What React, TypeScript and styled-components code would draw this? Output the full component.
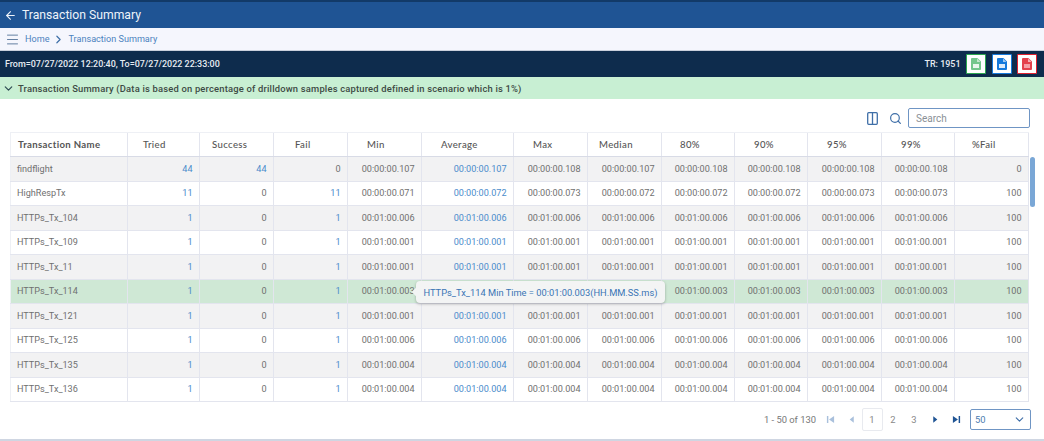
import React from 'react'
import styled, { createGlobalStyle } from 'styled-components'
import { ArrowLeft, ChevronDown, ChevronRight, Menu, Search } from 'lucide-react'

const GlobalStyle = createGlobalStyle`
  html, body {
    margin: 0;
    padding: 0;
    background: #fff;
    font-family: Roboto, "Liberation Sans", Arial, sans-serif;
    overflow: hidden;
  }
  * { box-sizing: border-box; }
`

const COLUMNS = '118px 72px 74px 74px 74px 92px 74px 74px 73px 73px 74px 73px 74px'
const BORDER = '#e3e5ee'
const LINK = '#4a8ccb'
const TEXT = '#707070'

const Page = styled.div`
  width: 1044px;
  height: 441px;
  display: flex;
  flex-direction: column;
  overflow: hidden;
  border-bottom: 2px solid #cfd6e2;
`

const TitleBar = styled.div`
  height: 28px;
  flex: none;
  display: flex;
  align-items: center;
  gap: 5px;
  padding-left: 4px;
  background: #1f5494;
  border-top: 2px solid #123a68;
  color: #eef3fa;
  font-size: 12.2px;
`

const Breadcrumb = styled.div`
  height: 23px;
  flex: none;
  display: flex;
  align-items: center;
  padding-left: 5px;
  background: #f5f6fd;
  border-bottom: 1px solid #c9d0dc;
  color: #4c82bd;
  font-size: 9.1px;
`

const Crumbs = styled.div`
  display: flex;
  align-items: center;
  gap: 3px;
  margin-left: 5px;
`

const RunBar = styled.div`
  height: 26px;
  flex: none;
  display: flex;
  align-items: center;
  justify-content: space-between;
  padding: 0 7px 0 5px;
  background: #0e2c4d;
  color: #e8edf3;
  font-size: 8.95px;
  font-weight: 500;
`

const RunActions = styled.div`
  display: flex;
  align-items: center;
  gap: 5.5px;
`

const ExportButton = styled.button<{ $tone: string }>`
  width: 20px;
  height: 20px;
  padding: 0;
  display: flex;
  align-items: center;
  justify-content: center;
  background: #fff;
  border: 1.5px solid ${p => p.$tone};
  border-radius: 1px;
  color: ${p => p.$tone};
`

const SummaryBar = styled.div`
  height: 22px;
  flex: none;
  display: flex;
  align-items: center;
  gap: 3px;
  padding-left: 2px;
  background: #c8efd3;
  color: #3d4a44;
  font-size: 9.4px;
  font-weight: 500;
  letter-spacing: 0.19px;
`

const Content = styled.div`
  flex: 1;
  min-height: 0;
  display: flex;
  flex-direction: column;
  padding: 7px 15px 0 10px;
`

const TableTools = styled.div`
  height: 24px;
  flex: none;
  margin-right: -1px;
  display: flex;
  align-items: center;
  justify-content: flex-end;
  color: #3f6fa8;
`

const ColumnsGlyph = styled.svg`
  width: 11px;
  height: 13px;
  margin-right: 11px;
  fill: none;
  stroke: #3f6fa8;
  stroke-width: 1.3;
`

const SearchBox = styled.div`
  width: 122px;
  height: 20px;
  margin-left: 6px;
  padding-left: 7px;
  display: flex;
  align-items: center;
  background: #fff;
  border: 1px solid #6f95c4;
  border-radius: 2px;
  color: #8a8f96;
  font-size: 10px;
`

const TableFrame = styled.div`
  position: relative;
  margin-top: 2px;
  height: 271px;
  flex: none;
  border-bottom: 1px solid #fff;
`

const Row = styled.div<{ $bg?: string }>`
  display: grid;
  grid-template-columns: ${COLUMNS};
  height: 24.5px;
  background: ${p => p.$bg || '#fff'};
  border-bottom: 1px solid ${BORDER};
`

const HeaderRow = styled(Row)`
  height: 25px;
  border-top: 1px solid #eef0f5;
  border-bottom: 1px solid #d8dbe6;
`

const HeaderCell = styled.div<{ $first?: boolean; $pad: number }>`
  display: flex;
  align-items: center;
  padding-left: ${p => p.$pad}px;
  border-right: 1px solid ${BORDER};
  color: #555;
  font-family: Lato, "Noto Sans", sans-serif;
  font-size: 9.6px;
  font-weight: ${p => (p.$first ? 700 : 500)};
  letter-spacing: 0.35px;
  white-space: nowrap;
  &:first-child { border-left: 1px solid #eef0f5; }
`

const Cell = styled.div<{ $left?: boolean; $link?: boolean }>`
  display: flex;
  align-items: center;
  justify-content: ${p => (p.$left ? 'flex-start' : 'flex-end')};
  padding: 0 ${p => (p.$left ? 0 : 6.5)}px 0 ${p => (p.$left ? 6 : 0)}px;
  border-right: 1px solid ${BORDER};
  color: ${p => (p.$link ? LINK : TEXT)};
  font-size: 9.1px;
  white-space: nowrap;
  overflow: hidden;
  &:first-child { border-left: 1px solid #eef0f5; }
`

const ScrollThumb = styled.div`
  position: absolute;
  top: 25px;
  right: -6px;
  width: 5px;
  height: 50px;
  border-radius: 3px;
  background: #7aa7d6;
`

const Tip = styled.div`
  position: absolute;
  left: 406px;
  top: 149px;
  height: 22px;
  width: 249px;
  display: flex;
  align-items: center;
  padding-left: 7.5px;
  background: #f3f4f4;
  border-radius: 4px;
  box-shadow: 0 1px 3px rgba(0, 0, 0, 0.28);
  color: #3a74b4;
  font-size: 9.3px;
  white-space: nowrap;
`

const TipArrow = styled.div`
  position: absolute;
  left: -3px;
  top: 8px;
  width: 6px;
  height: 6px;
  background: #f3f4f4;
  transform: rotate(45deg);
`

const Pager = styled.div`
  height: 32px;
  flex: none;
  margin-right: -2px;
  display: flex;
  align-items: center;
  justify-content: flex-end;
  color: #777;
  font-size: 9.4px;
`

const PageCount = styled.span`
  margin-right: 3.5px;
  white-space: nowrap;
`

const PagerIcon = styled.svg<{ $active?: boolean }>`
  width: 9px;
  height: 9px;
  margin: 0 6px;
  flex: none;
  fill: ${p => (p.$active ? '#1f5494' : '#a9c0dc')};
`

const PageNumber = styled.span<{ $current?: boolean }>`
  width: 21px;
  height: 23px;
  flex: none;
  display: flex;
  align-items: center;
  justify-content: center;
  border: 1px solid ${p => (p.$current ? '#e8eaef' : 'transparent')};
  border-radius: 2px;
  color: #888;
`

const PageSize = styled.div`
  width: 61px;
  height: 21px;
  margin-left: 3.5px;
  padding: 0 4px;
  flex: none;
  display: flex;
  align-items: center;
  justify-content: space-between;
  border: 1px solid #6f95c4;
  border-radius: 2px;
  color: #4c7bb0;
`

const headers = ['Transaction Name', 'Tried', 'Success', 'Fail', 'Min', 'Average', 'Max', 'Median', '80%', '90%', '95%', '99%', '%Fail']
const headerPads = [7, 15, 12, 21, 19, 19, 19, 11, 18, 19, 19, 19, 17]

type Data = { name: string; tried: number; success: number; fail: number; t: string[]; pct: number }

const rows: Data[] = [
  { name: 'findflight', tried: 44, success: 44, fail: 0, t: ['00:00:00.107', '00:00:00.107', '00:00:00.108', '00:00:00.107', '00:00:00.108', '00:00:00.108', '00:00:00.108', '00:00:00.108'], pct: 0 },
  { name: 'HighRespTx', tried: 11, success: 0, fail: 11, t: ['00:00:00.071', '00:00:00.072', '00:00:00.073', '00:00:00.072', '00:00:00.072', '00:00:00.072', '00:00:00.073', '00:00:00.073'], pct: 100 },
  ...[
    ['HTTPs_Tx_104', '006'],
    ['HTTPs_Tx_109', '001'],
    ['HTTPs_Tx_11', '001'],
    ['HTTPs_Tx_114', '003'],
    ['HTTPs_Tx_121', '001'],
    ['HTTPs_Tx_125', '006'],
    ['HTTPs_Tx_135', '004'],
    ['HTTPs_Tx_136', '004']
  ].map(([name, ms]) => ({
    name,
    tried: 1,
    success: 0,
    fail: 1,
    t: Array(8).fill(`00:01:00.${ms}`),
    pct: 100
  }))
]

const rowColor = (i: number) => {
  if (rows[i].name === 'HTTPs_Tx_114') return '#cfe8d5'
  return i % 2 === 0 ? '#f2f2f3' : '#fff'
}

const FileGlyph = ({ mark, opacity = 1 }: { mark: string; opacity?: number }) => (
  <svg width="10" height="12" viewBox="0 0 10 12" fill="currentColor" opacity={opacity}>
    <path d="M1 0h5.4L10 3.6V11a1 1 0 0 1-1 1H1a1 1 0 0 1-1-1V1a1 1 0 0 1 1-1z" />
    <path d="M6 0.6V4h3.4z" fill="#fff" opacity="0.6" />
    <rect x="2" y="6" width="6" height="4" fill={mark} opacity="0.85" />
  </svg>
)

const First = () => (
  <PagerIcon viewBox="0 0 10 10"><path d="M1 1h1.6v8H1zM9 1v8L3.4 5z" /></PagerIcon>
)
const Prev = () => (
  <PagerIcon viewBox="0 0 10 10"><path d="M7.5 1.5v7L3 5z" /></PagerIcon>
)
const Next = () => (
  <PagerIcon $active viewBox="0 0 10 10"><path d="M2.5 1.5v7L7 5z" /></PagerIcon>
)
const Last = () => (
  <PagerIcon $active viewBox="0 0 10 10"><path d="M9 1H7.4v8H9zM1 1v8l5.6-4z" /></PagerIcon>
)

export default function App() {
  return (
    <Page>
      <GlobalStyle />
      <TitleBar>
        <ArrowLeft size={13} strokeWidth={2} />
        Transaction Summary
      </TitleBar>
      <Breadcrumb>
        <Menu size={15} strokeWidth={1.4} color="#4f6f96" />
        <Crumbs>
          <span>Home</span>
          <ChevronRight size={13} strokeWidth={2.2} color="#3f6fa8" />
          <span>Transaction Summary</span>
        </Crumbs>
      </Breadcrumb>
      <RunBar>
        <span>From=07/27/2022 12:20:40, To=07/27/2022 22:33:00</span>
        <RunActions>
          <span>TR: 1951</span>
          <ExportButton $tone="#2aa84f"><FileGlyph mark="#fff" opacity={0.65} /></ExportButton>
          <ExportButton $tone="#1479dc"><FileGlyph mark="#fff" /></ExportButton>
          <ExportButton $tone="#e0202f"><FileGlyph mark="#f6a3aa" opacity={0.85} /></ExportButton>
        </RunActions>
      </RunBar>
      <SummaryBar>
        <ChevronDown size={13} strokeWidth={2.2} color="#2d4a52" />
        Transaction Summary (Data is based on percentage of drilldown samples captured defined in scenario which is 1%)
      </SummaryBar>
      <Content>
        <TableTools>
          <ColumnsGlyph viewBox="0 0 11 13">
            <rect x="0.7" y="0.7" width="9.6" height="11.6" rx="1" />
            <path d="M5.5 0.7v11.6" />
          </ColumnsGlyph>
          <Search size={13} strokeWidth={2.2} />
          <SearchBox>Search</SearchBox>
        </TableTools>
        <TableFrame>
          <HeaderRow>
            {headers.map((h, i) => (
              <HeaderCell key={h} $first={i === 0} $pad={headerPads[i]}>{h}</HeaderCell>
            ))}
          </HeaderRow>
          {rows.map((r, i) => (
            <Row key={r.name} $bg={rowColor(i)}>
              <Cell $left>{r.name}</Cell>
              <Cell $link>{r.tried}</Cell>
              <Cell $link={r.success > 0}>{r.success}</Cell>
              <Cell $link={r.fail > 0}>{r.fail}</Cell>
              {r.t.map((v, j) => (
                <Cell key={j} $link={j === 1}>{v}</Cell>
              ))}
              <Cell>{r.pct}</Cell>
            </Row>
          ))}
          <ScrollThumb />
          <Tip>
            <TipArrow />
            HTTPs_Tx_114 Min Time = 00:01:00.003(HH.MM.SS.ms)
          </Tip>
        </TableFrame>
        <Pager>
          <PageCount>1 - 50 of 130</PageCount>
          <First />
          <Prev />
          <PageNumber $current>1</PageNumber>
          <PageNumber>2</PageNumber>
          <PageNumber>3</PageNumber>
          <Next />
          <Last />
          <PageSize>
            50
            <ChevronDown size={13} strokeWidth={2} color="#3f6fa8" />
          </PageSize>
        </Pager>
      </Content>
    </Page>
  )
}
